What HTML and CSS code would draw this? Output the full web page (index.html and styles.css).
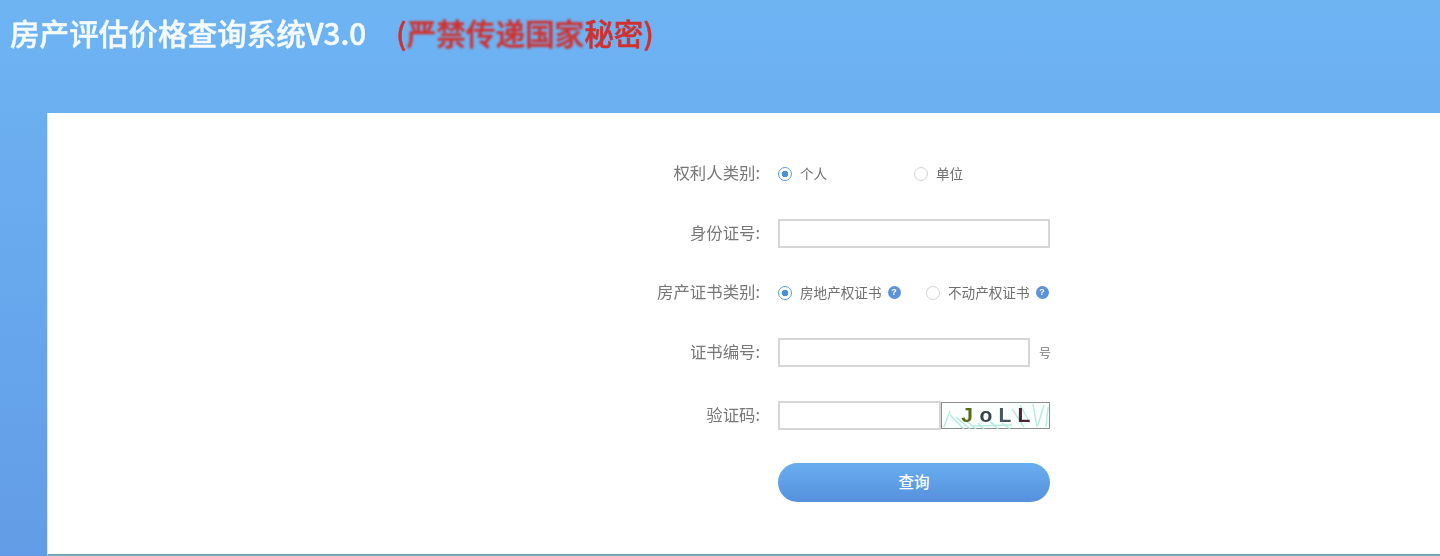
FILE: index.html
```html
<!DOCTYPE html>
<html lang="zh-CN">
<head>
<meta charset="utf-8">
<title>房产评估价格查询系统V3.0</title>
<link rel="stylesheet" href="styles.css">
</head>
<body>
<header class="top">
  <h1 class="title">房产评估价格查询系统V3.0<span class="secret">(<span class="smear">严禁传递国家</span>秘密)</span></h1>
</header>
<main class="panel">
  <form class="form">
    <div class="row row-a">
      <label class="label">权利人类别:</label>
      <div class="controls">
        <span class="option option-wide"><i class="radio on"></i><span class="txt">个人</span></span>
        <span class="option"><i class="radio"></i><span class="txt">单位</span></span>
      </div>
    </div>
    <div class="row row-b">
      <label class="label">身份证号:</label>
      <div class="controls"><input class="field field-full" type="text"></div>
    </div>
    <div class="row row-a">
      <label class="label">房产证书类别:</label>
      <div class="controls">
        <span class="option option-cert"><i class="radio on"></i><span class="txt">房地产权证书</span><b class="help">?</b></span>
        <span class="option"><i class="radio"></i><span class="txt">不动产权证书</span><b class="help">?</b></span>
      </div>
    </div>
    <div class="row row-c">
      <label class="label">证书编号:</label>
      <div class="controls"><input class="field field-num" type="text"><span class="unit">号</span></div>
    </div>
    <div class="row row-d">
      <label class="label">验证码:</label>
      <div class="controls">
        <input class="field field-code" type="text">
        <div class="captcha">
          <svg class="noise" width="108" height="26" viewBox="0 0 108 26" fill="none" stroke="#b4ebdf" stroke-width="1.4">
            <path d="M2 24 L8 8 M8 12 L22 26 M14 14 L28 26 M22 16 L34 26 M36 20 L42 26 M48 18 L56 26 M60 20 L68 26"/>
            <path d="M70 6 L82 24 M78 2 L88 20 M91 1 L95 24 M102 2 L96 22 M106 4 L104 24 M30 23 L70 22"/>
          </svg>
          <span class="cc c1">J</span><span class="cc c2">o</span><span class="cc c3">L</span><span class="cc c4">L</span>
        </div>
      </div>
    </div>
    <div class="row">
      <div class="label"></div>
      <button class="submit" type="button">查询</button>
    </div>
  </form>
</main>
</body>
</html>
```
FILE: styles.css
```css
* { box-sizing: border-box; }
html, body { margin: 0; height: 556px; overflow: hidden; }
body {
  display: flex;
  flex-direction: column;
  background: linear-gradient(180deg, #6eb4f3 0%, #629ce6 100%);
  font-family: "Noto Sans CJK SC", "Liberation Sans", sans-serif;
  color: #666;
}
.top { height: 113px; padding: 13px 0 0 10px; flex: none; }
.title {
  margin: 0;
  font-size: 29.6px;
  line-height: 40px;
  font-weight: 500;
  color: #f4faff;
  -webkit-text-stroke: 0.5px currentColor;
  white-space: nowrap;
  filter: blur(0.6px);
}
.secret { margin-left: 30px; color: #d0312f; }
.smear { filter: blur(1.2px); display: inline-block; }
.panel {
  flex: 1;
  margin-left: 47px;
  background: #fff;
  border-left: 1px solid #d6eafb;
  border-bottom: 2px solid #6fa9b8;
  padding: 46px 0 0 592px;
}
.form { display: flex; flex-direction: column; filter: blur(0.4px); }
.row { display: flex; align-items: center; height: 29px; }
.row-a { margin-bottom: 31px; }
.row-b { margin-bottom: 30px; }
.row-c { margin-bottom: 34px; }
.row-d { margin-bottom: 33px; }
.row:last-child { height: 39px; }
.label {
  width: 120px;
  margin-right: 18px;
  padding-bottom: 3px;
  text-align: right;
  font-size: 16.4px;
  color: #777;
  white-space: nowrap;
}
.controls { display: flex; align-items: center; font-size: 13.6px; color: #6e6e6e; }
.option { display: flex; align-items: center; white-space: nowrap; }
.option-wide { width: 136px; }
.option-cert { width: 148px; }
.txt { padding-bottom: 1px; }
.radio {
  width: 14px;
  height: 14px;
  margin-right: 8px;
  border: 1px solid #d4d4d4;
  border-radius: 50%;
  background: #fff;
  flex: none;
}
.radio.on {
  border-color: #5b9ddc;
  background: radial-gradient(circle, #4a90d9 0 3px, #fff 3.6px);
}
.help {
  width: 13px;
  height: 13px;
  margin-left: 6px;
  border-radius: 50%;
  background: #5a93d8;
  color: #fff;
  font: 700 9px/13px "Liberation Sans", sans-serif;
  text-align: center;
  flex: none;
}
.field {
  height: 29px;
  padding: 0 6px;
  border: 2px solid #d6d6d6;
  background: #fff;
  outline: 0;
}
.field-full { width: 272px; }
.field-num { width: 252px; }
.field-code { width: 163px; }
.unit { margin-left: 9px; font-size: 12px; color: #777; }
.captcha {
  position: relative;
  display: flex;
  align-items: center;
  justify-content: center;
  gap: 5px;
  width: 109px;
  height: 27px;
  padding-bottom: 3px;
  border: 1px solid #8a8f8e;
  background: #fbfffe;
  font: 700 21px/1 "Liberation Sans", sans-serif;
}
.noise { position: absolute; left: 0; top: 0; }
.cc { position: relative; width: 14px; text-align: center; }
.c1 { color: #5c6a14; }
.c2 { color: #38424a; }
.c3 { color: #4c5660; }
.c4 { color: #4a2636; }
.submit {
  width: 272px;
  height: 39px;
  border: 0;
  border-radius: 20px;
  padding-bottom: 4px;
  background: linear-gradient(180deg, #68aeef 0%, #5690de 100%);
  color: #fff;
  font: 500 15.6px "Noto Sans CJK SC", sans-serif;
}
```
